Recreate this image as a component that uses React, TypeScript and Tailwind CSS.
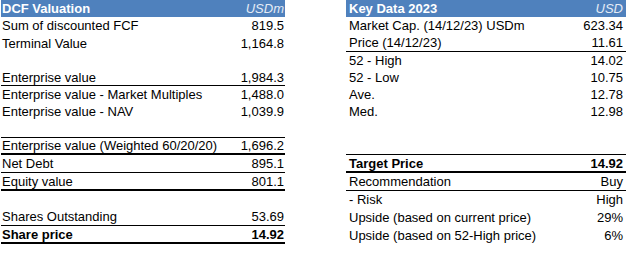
type Cell = { label: string; value: string; bold?: boolean; border?: "thin" | "thick" };

// shared sheet row heights (both tables sit on the same spreadsheet rows)
const rowHeights = [17, 17, 18, 17, 17, 17, 17, 18, 17, 18, 18, 17, 18, 18];

const dcf: (Cell | null)[] = [
  { label: "Sum of discounted FCF", value: "819.5" },
  { label: "Terminal Value", value: "1,164.8" },
  null,
  { label: "Enterprise value", value: "1,984.3", border: "thin" },
  { label: "Enterprise value - Market Multiples", value: "1,488.0" },
  { label: "Enterprise value - NAV", value: "1,039.9" },
  { label: "", value: "", border: "thin" },
  { label: "Enterprise value (Weighted 60/20/20)", value: "1,696.2", border: "thick" },
  { label: "Net Debt", value: "895.1", border: "thin" },
  { label: "Equity value", value: "801.1", border: "thick" },
  null,
  { label: "Shares Outstanding", value: "53.69", border: "thin" },
  { label: "Share price", value: "14.92", bold: true, border: "thick" },
];

const keyData: (Cell | null)[] = [
  { label: "Market Cap. (14/12/23) USDm", value: "623.34" },
  { label: "Price (14/12/23)", value: "11.61", border: "thin" },
  { label: "52 - High", value: "14.02" },
  { label: "52 - Low", value: "10.75" },
  { label: "Ave.", value: "12.78" },
  { label: "Med.", value: "12.98" },
  null,
  { label: "", value: "", border: "thin" },
  { label: "Target Price", value: "14.92", bold: true, border: "thick" },
  { label: "Recommendation", value: "Buy", border: "thin" },
  { label: "- Risk", value: "High" },
  { label: "Upside (based on current price)", value: "29%" },
  { label: "Upside (based on 52-High price)", value: "6%" },
];

function Table({ title, unit, rows, pad }: { title: string; unit: string; rows: (Cell | null)[]; pad: string }) {
  return (
    <div className="flex flex-col">
      <div
        className={`flex items-center justify-between bg-[#4f81bd] text-white ${pad}`}
        style={{ height: rowHeights[0] }}
      >
        <span className="font-bold">{title}</span>
        <span className="italic text-[#e4ebf5]">{unit}</span>
      </div>
      {rows.map((r, i) => {
        const h = rowHeights[i + 1];
        const b = r?.border === "thick" ? "border-b-2 border-black" : r?.border === "thin" ? "border-b border-black" : "";
        return (
          <div key={i} className={`flex items-center justify-between ${pad} ${b} ${r?.bold ? "font-bold" : ""}`} style={{ height: h }}>
            <span>{r?.label}</span>
            <span>{r?.value}</span>
          </div>
        );
      })}
    </div>
  );
}

export default function App() {
  return (
    <div className="flex h-[254px] w-[640px] gap-[61px] bg-white pl-[1px] font-['Liberation_Sans',Arial,sans-serif] text-[13px] leading-none text-black">
      <div className="w-[284px]">
        <Table title="DCF Valuation" unit="USDm" rows={dcf} pad="pl-[1px] pr-[1px]" />
      </div>
      <div className="w-[280px]">
        <Table title="Key Data 2023" unit="USD" rows={keyData} pad="pl-[3px] pr-[3px]" />
      </div>
    </div>
  );
}
